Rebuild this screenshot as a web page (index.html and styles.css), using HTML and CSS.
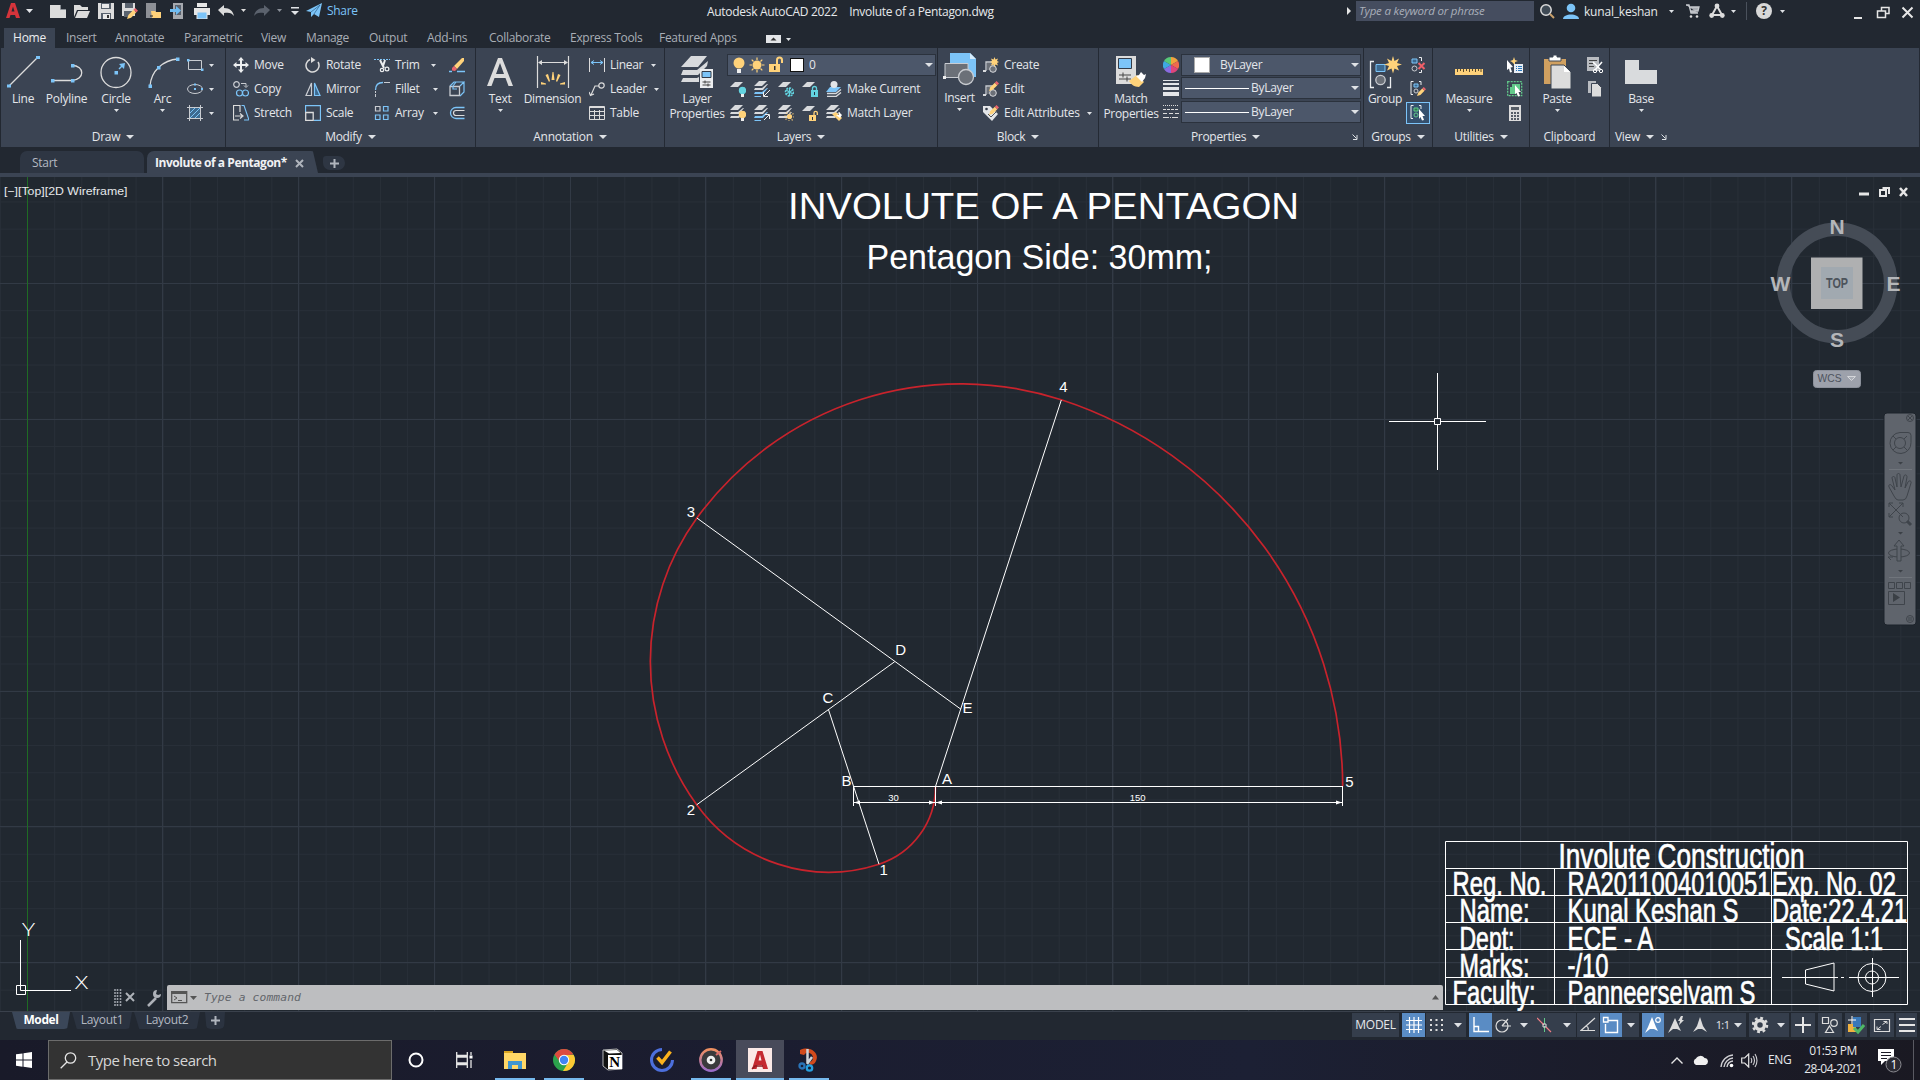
FILE: index.html
```html
<!DOCTYPE html>
<html lang="en">
<head>
<meta charset="utf-8">
<title>Autodesk AutoCAD 2022 - Involute of a Pentagon.dwg</title>
<link rel="stylesheet" href="styles.css">
</head>
<body>
<svg width="0" height="0" class="defs">
  <symbol id="dn" viewBox="0 0 5 3"><path d="M0 0h5L2.500 3z" fill="#dfe2e6"/></symbol>
  <symbol id="dnb" viewBox="0 0 8 4"><path d="M0 0h8L4 4z" fill="#dfe2e6"/></symbol>
  <symbol id="sheets" viewBox="0 0 16 16"><path d="M5 0h8L8 5H0zM1 7h7l5-4h1L9 9H0zM1 11h7l5-4h1l-5 6H0z" fill="#d8dadd"/></symbol>
  <symbol id="sheetsb" viewBox="0 0 16 16"><path d="M5 0h8L8 5H0zM1 7h7l5-4h1L9 9H0z" fill="#d8dadd"/><path d="M1 11h7l5-4h1l-5 6H0zM1 15h6v1H0z" fill="#7cc4f8"/></symbol>
  <symbol id="sheet1" viewBox="0 0 16 16"><path d="M5 1h8L8 6H0z" fill="#d8dadd"/></symbol>
  <symbol id="launch" viewBox="0 0 6 6"><path d="M.5.5l4 4M5 1v4.500H1" fill="none" stroke="#dfe2e6"/></symbol>
  <symbol id="pencil" viewBox="0 0 12 12"><path d="M0 12l1.500-4.500L7 2l3 3-5.500 5.500z" fill="#ffd27a"/><path d="M7 2l2-2 3 3-2 2z" fill="#e8646c"/></symbol>
  <symbol id="blk" viewBox="0 0 16 16"><path d="M3 14H1M3 14V5h9" fill="none" stroke="#c9ccd1" stroke-width="1.300"/><path d="M4 6h7v7H4z" fill="#6b7078"/><circle cx="10" cy="12" r="3.300" fill="#6b7078" stroke="#d8dadd"/><path d="M0 13h3v2H0z" fill="#d8dadd"/></symbol>
</svg>
<div class="app">

<header class="titlebar">
  <div class="quick">
    <svg class="q1" width="28" height="18" viewBox="0 0 28 18"><path d="M0 16L5 1h4l5 15h-4l-1-3H4.500l-1 3zM5.500 9.500h3L7 4.500z" fill="#d5343b"/><path d="M20 7h7l-3.500 4z" fill="#e3e5e8"/></svg>
    <svg width="16" height="16"><path d="M0 2h11l5 4v9H0zM11 2v4h5" fill="#dcdcdc"/><path d="M10.500 2v4.500H16" stroke="#8a8f96" fill="none"/></svg>
    <svg width="16" height="16"><path d="M0 2h6l2 2h6v3H3L0 14z" fill="#dcdcdc"/><path d="M4 8h12l-3 7H1z" fill="#dcdcdc"/></svg>
    <svg width="16" height="16"><path d="M0 0h16v16H0z" fill="#dcdcdc"/><path d="M3 0h10v6H3zM3 10h10v6H3z" fill="#59626e"/><path d="M4 1h7v4H4zM5 11h7v5H5z" fill="#e9e9e9"/><path d="M9 12h2v3H9z" fill="#333"/></svg>
    <svg width="16" height="16"><path d="M0 0h13v13H0z" fill="#dcdcdc"/><path d="M3 0h8v5H3zM2 8h8v6H2z" fill="#59626e"/><use href="#pencil" x="5" y="5" width="11" height="11"/></svg>
    <svg width="16" height="16"><path d="M0 0h10v15H0z" fill="#8d9096"/><path d="M5 8h4l1 1h5v6H6z" fill="#ffd27a"/><path d="M4 13h3" stroke="#222"/></svg>
    <svg width="16" height="16"><path d="M3 0h10v16H3z" fill="#a6a9ae"/><path d="M5 2h6v10H5z" fill="#59626e"/><path d="M0 6h6V3l5 4.500L6 12V9H0z" fill="#6fbcf2"/></svg>
    <svg width="16" height="16"><path d="M3 0h10v4H3zM0 5h16v7H0z" fill="#e6e6e6"/><path d="M3 9h10v7H3z" fill="#7cc4f8" stroke="#e6e6e6"/></svg>
    <svg width="28" height="16"><path d="M0 7l6-5v3c6 0 9 3 10 8-2-3-5-4-10-3v3z" fill="#dcdcdc"/><path d="M23 6h5l-2.500 3z" fill="#dcdcdc"/></svg>
    <svg width="28" height="16"><path d="M16 7l-6-5v3C4 5 1 8 0 13c2-3 5-4 10-3v3z" fill="#5b626d"/><path d="M23 6h5l-2.500 3z" fill="#8b9099"/></svg>
    <svg width="8" height="16"><path d="M0 4h8v1.500H0zM0 8h8l-4 4z" fill="#dfe2e6"/></svg>
    <svg width="16" height="16"><path d="M0 8L16 0l-3 14-5-3-3 3V9z" fill="#7cc4f8"/><path d="M5 9l9-7-6 9" stroke="#2b5f88" fill="none" stroke-width=".7"/></svg>
    <span class="share">Share</span>
  </div>
  <div class="apptitle"><span>Autodesk AutoCAD 2022</span><span>Involute of a Pentagon.dwg</span></div>
  <div class="infocenter">
    <svg width="8" height="10"><path d="M1 1l4 4-4 4z" fill="#e6e6e6"/></svg>
    <div class="kw">Type a keyword or phrase</div>
    <svg class="mag" width="16" height="16"><circle cx="6" cy="7" r="5.200" fill="#3f4a55" stroke="#dcdcdc" stroke-width="1.500"/><path d="M10 11l4 4" stroke="#c9a06b" stroke-width="2"/></svg>
    <svg class="usr" width="16" height="16"><circle cx="8" cy="5" r="4.300" fill="#7cc4f8"/><path d="M0 16c0-6 16-6 16 0z" fill="#7cc4f8"/></svg>
    <span class="uname">kunal_keshan</span>
    <svg class="a1" width="5" height="3"><use href="#dn"/></svg>
    <svg class="cart" width="14" height="16"><path d="M0 2h3l2 8h7M4 4h9l-1 4H5" fill="#a9adb3" stroke="#c6c9ce" stroke-width="1.300"/><circle cx="5" cy="13.500" r="1.300" fill="#dcdcdc"/><circle cx="11" cy="13.500" r="1.300" fill="#dcdcdc"/></svg>
    <svg class="tri" width="16" height="16"><path d="M8 3L3 12h10z" fill="none" stroke="#dcdcdc" stroke-width="2"/><circle cx="8" cy="3" r="2.400" fill="#dcdcdc"/><circle cx="2.700" cy="12.500" r="2.400" fill="#dcdcdc"/><circle cx="13.300" cy="12.500" r="2.400" fill="#dcdcdc"/></svg>
    <svg class="a2" width="5" height="3"><use href="#dn"/></svg>
    <i class="vsep"></i>
    <span class="help">?</span>
    <svg class="a3" width="5" height="3"><use href="#dn"/></svg>
    <svg class="wc" width="60" height="14"><path d="M0 11h8v2H0z" fill="#e6e6e6"/><path d="M27.500 4.500v-3h7.500v6h-3M23.500 5h8v6.500h-8z" fill="none" stroke="#e6e6e6" stroke-width="1.500"/><path d="M48.500 1.500l10 10m0-10l-10 10" stroke="#e6e6e6" stroke-width="2"/></svg>
  </div>
</header>

<nav class="rtabs">
  <b class="on">Home</b><span>Insert</span><span>Annotate</span><span>Parametric</span><span>View</span><span>Manage</span><span>Output</span><span>Add-ins</span><span>Collaborate</span><span>Express Tools</span><span>Featured Apps</span>
  <svg width="26" height="9"><path d="M0 0h15v8H0z" fill="#e3e5e8"/><path d="M4.500 5.500h6l-3-3z" fill="#333"/><path d="M20 3h5l-2.500 3z" fill="#dfe2e6"/></svg>
</nav>

<section class="ribbon">
  <div class="panel p-draw"><div class="body">
    <div class="big"><svg width="34" height="34"><path d="M3 31L31 3" stroke="#dcdcdc" stroke-width="1.200"/><path d="M1 29.500h4v3H1zM30 1h4v3h-4z" fill="#7cc4f8"/></svg><span>Line</span></div>
    <div class="big"><svg width="34" height="34"><path d="M3 25.500h19c13-1 13-15 0-15" fill="none" stroke="#dcdcdc" stroke-width="1.300"/><path d="M1 24h3.500v3.500H1zM21 24h3.500v3.500H21zM21 9h3.500v3.500H21z" fill="#7cc4f8"/></svg><span>Polyline</span></div>
    <div class="big"><svg width="34" height="34"><circle cx="17" cy="17.500" r="15" fill="none" stroke="#dcdcdc" stroke-width="1.300"/><path d="M15.500 16h3.500v3.500h-3.500zM20 9l6-1-1 6z" fill="#7cc4f8"/><path d="M20 14l4-4" stroke="#7cc4f8" stroke-width="1.500"/></svg><span>Circle</span><svg class="d" width="5" height="3"><use href="#dn"/></svg></div>
    <div class="big"><svg width="34" height="34"><path d="M4 31C5 16 17 5 32 4" fill="none" stroke="#dcdcdc" stroke-width="1.300"/><path d="M2.500 29.500H6V33H2.500zM11 11h3.500v3.500H11zM30 2.500h3.500V6H30z" fill="#7cc4f8"/></svg><span>Arc</span><svg class="d" width="5" height="3"><use href="#dn"/></svg></div>
    <div class="col">
      <div class="row"><svg width="17" height="16"><path d="M1.500 3.500h13v9h-13z" fill="none" stroke="#c9ccd1"/><path d="M0 2h2.500v2.500H0zM14 11.500h2.500V14H14z" fill="#7cc4f8"/></svg><svg width="5" height="3"><use href="#dn"/></svg></div>
      <div class="row"><svg width="17" height="16"><ellipse cx="8" cy="8" rx="7.500" ry="4.500" fill="none" stroke="#c9ccd1"/><path d="M7 7h2v2H7zM7 2.500h2v2H7zM14 7h2v2h-2z" fill="#7cc4f8"/></svg><svg width="5" height="3"><use href="#dn"/></svg></div>
      <div class="row"><svg width="17" height="16"><path d="M3 3h10v10H3z" fill="#3d6a90"/><path d="M3 8l5-5M3 13L13 3M8 13l5-5" stroke="#7cc4f8"/><path d="M2.500 0v16M13.500 0v16M0 2.500h16M0 13.500h16" stroke="#c9ccd1"/></svg><svg width="5" height="3"><use href="#dn"/></svg></div>
    </div>
  </div><footer>Draw<svg width="8" height="4"><use href="#dnb"/></svg></footer></div>

  <div class="panel p-mod"><div class="body modgrid">
    <div class="row"><svg width="16" height="16"><path d="M8 0l3 3.500H9V7h3.500V5L16 8l-3.500 3V9H9v3.500h2L8 16l-3-3.500h2V9H3.500v2L0 8l3.500-3v2H7V3.500H5z" fill="#eceef0"/></svg><span>Move</span></div>
    <div class="row"><svg width="16" height="16"><path d="M5 2.500A6.500 6.500 0 1 0 13 5" fill="none" stroke="#dcdcdc" stroke-width="1.500"/><path d="M6 0l4.500 3L6 6z" fill="#dcdcdc"/></svg><span>Rotate</span></div>
    <div class="row"><svg width="16" height="16"><path d="M0 2.500h16" stroke="#7cc4f8" stroke-dasharray="2 1"/><path d="M6 3l4 8M11 3L9 9" stroke="#eceef0" stroke-width="2"/><circle cx="8" cy="13" r="1.700" fill="none" stroke="#eceef0" stroke-width="1.200"/><circle cx="13" cy="12" r="1.900" fill="none" stroke="#eceef0" stroke-width="1.200"/></svg><span class="w">Trim</span><svg width="5" height="3"><use href="#dn"/></svg></div>
    <div class="row"><svg width="16" height="16"><path d="M5 9l8-8 2 0v3l-7 8z" fill="#ffd27a"/><path d="M3 11l2-2 3 3-2 2-3-.5z" fill="#e8646c"/><path d="M0 14.500h3M8 14.500h8" stroke="#7cc4f8" stroke-width="1.300"/></svg></div>
    <div class="row"><svg width="16" height="16"><circle cx="3.500" cy="3.500" r="2.800" fill="none" stroke="#c9ccd1" stroke-width="1.200"/><path d="M8 2.500h5v3M11 4.500l2 2 2-2" fill="none" stroke="#c9ccd1"/><circle cx="6.500" cy="12" r="3" fill="none" stroke="#7cc4f8" stroke-width="1.200"/><circle cx="12.500" cy="12" r="3" fill="none" stroke="#7cc4f8" stroke-width="1.200"/></svg><span>Copy</span></div>
    <div class="row"><svg width="16" height="16"><path d="M6.500 2v12.500H1z" fill="none" stroke="#c9ccd1" stroke-width="1.200"/><path d="M9.500 2v12.500H15z" fill="#3d6a90" stroke="#7cc4f8" stroke-width="1.200"/></svg><span>Mirror</span></div>
    <div class="row"><svg width="16" height="16"><path d="M1.500 16V10" stroke="#c9ccd1" stroke-dasharray="3 1"/><path d="M1.500 9c0-5 3-7.500 7.500-7.500" fill="none" stroke="#7cc4f8" stroke-width="1.300"/><path d="M10 1.500h6" stroke="#c9ccd1"/></svg><span class="w">Fillet</span><svg width="5" height="3"><use href="#dn"/></svg></div>
    <div class="row"><svg width="16" height="16"><path d="M1 5.500h9.500v9H1z" fill="none" stroke="#c9ccd1" stroke-width="1.300"/><path d="M1 5l4-4h10l-4 4M15 1v10l-4 4M4 5V8h4M7 1L4 5" fill="none" stroke="#7cc4f8" stroke-width="1.200"/></svg></div>
    <div class="row"><svg width="16" height="16"><path d="M6 15H.5V.5H7V7M2 11h7M7 8.500l3 2.500-3 2.500" fill="none" stroke="#dcdcdc" stroke-width="1.200"/><path d="M8.500.5H11L16 15h-5" fill="none" stroke="#7cc4f8" stroke-width="1.100"/></svg><span>Stretch</span></div>
    <div class="row"><svg width="16" height="16"><path d="M.5 7V.5h15v15H9" fill="none" stroke="#7cc4f8" stroke-width="1.300"/><path d="M.7 7.500h7.500v8H.7z" fill="none" stroke="#dcdcdc" stroke-width="1.300"/></svg><span>Scale</span></div>
    <div class="row"><svg width="16" height="16"><path d="M1.500 1.500h4.500v4.500H1.500z" fill="none" stroke="#c9ccd1" stroke-width="1.200"/><path d="M9.500 1.500H14v4.500H9.500zM1.500 10H6v4.500H1.500zM9.500 10H14v4.500H9.500z" fill="none" stroke="#7cc4f8" stroke-width="1.200"/></svg><span class="w">Array</span><svg width="5" height="3"><use href="#dn"/></svg></div>
    <div class="row"><svg width="16" height="16"><path d="M15.500 2.500H7a5.500 5.500 0 0 0 0 11h8.500" fill="none" stroke="#7cc4f8" stroke-width="1.300"/><path d="M15.500 5.500H7a2.500 2.500 0 0 0 0 5h8.500" fill="none" stroke="#dcdcdc" stroke-width="1.200"/></svg></div>
  </div><footer>Modify<svg width="8" height="4"><use href="#dnb"/></svg></footer></div>

  <div class="panel p-ann"><div class="body">
    <div class="big"><svg width="34" height="34"><path d="M4 31L15 3h4l11 28h-4.500l-3-8H11.500l-3 8zM13 19h8l-4-11z" fill="#dcdcdc"/></svg><span>Text</span><svg class="d" width="5" height="3"><use href="#dn"/></svg></div>
    <div class="big"><svg width="34" height="34"><path d="M1.500 1v32M32.500 1v32M3 7.500h28" stroke="#dcdcdc" stroke-width="1.200"/><path d="M2 7.500l4-2.500v5zM32 7.500L28 5v5z" fill="#dcdcdc"/><path d="M15.500 25h3L17.500 17h-1zM9.500 20l2.500-1 2 7-1 1zM24.500 20l-2.500-1-2 7 1 1zM5 27v2.500h5v-1zM29 27v2.500h-5v-1z" fill="#ffd27a"/></svg><span>Dimension</span></div>
    <div class="col">
      <div class="row"><svg width="16" height="16"><path d="M.5 1v14M15.500 1v14" stroke="#dcdcdc"/><path d="M2 5.500h12M5 3.500l-3 2 3 2M11 3.500l3 2-3 2" fill="none" stroke="#7cc4f8"/></svg><span class="w1">Linear</span><svg width="5" height="3"><use href="#dn"/></svg></div>
      <div class="row"><svg width="16" height="16"><circle cx="12.500" cy="4.500" r="2.700" fill="none" stroke="#dcdcdc" stroke-width="1.200"/><path d="M10 5H6L2 14M0 11l1.500 3.500L5 13" fill="none" stroke="#dcdcdc" stroke-width="1.200"/></svg><span class="w2">Leader</span><svg width="5" height="3"><use href="#dn"/></svg></div>
      <div class="row"><svg width="16" height="16"><path d="M.5 1.500h15v13H.5zM0 2.500h16M.5 6.500h15M.5 10.500h15M5.500 5v9M10.500 5v9" fill="none" stroke="#dcdcdc"/></svg><span>Table</span></div>
    </div>
  </div><footer>Annotation<svg width="8" height="4"><use href="#dnb"/></svg></footer></div>

  <div class="panel p-lay"><div class="body">
    <div class="big two"><svg width="34" height="34"><path d="M11 1h16l-9 11H1zM3 15h14L28 6l-1 5-9 9H1zM3 23h14l2-1v5H1z" fill="#d8dadd"/><path d="M20 14h13v19H20z" fill="#eceef0"/><path d="M22 16.500h9v6h-9z" fill="#7cc4f8" stroke="#333c49"/><path d="M22.500 27h8M22.500 30h8M25 25.500v3M28 28.500v3" stroke="#444"/></svg><span>Layer<br>Properties</span></div>
    <div class="laycol">
      <div class="combo laycombo">
        <svg width="62" height="18"><circle cx="7" cy="7" r="5.500" fill="#ffd27a"/><path d="M5 13h4v4H5z" fill="#eee"/><circle cx="25" cy="9" r="4.500" fill="#ffd27a"/><path d="M25 1.500v2.500M25 14v2.500M17.500 9H20M30 9h2.500M19.700 3.700l1.800 1.800M28.500 12.500l1.800 1.800M30.300 3.700l-1.800 1.800M21.500 12.500l-1.800 1.800" stroke="#ffd27a" stroke-width="1.200"/><path d="M37 8h11v8H37z" fill="#ffd27a"/><path d="M45 8V4a2.500 2.500 0 0 1 5 0v3" fill="none" stroke="#ffd27a" stroke-width="2"/><path d="M42 10h1.500v4H42z" fill="#333"/></svg>
        <i class="sw"></i><span>0</span><svg class="r" width="8" height="4"><use href="#dnb"/></svg>
      </div>
      <div class="licons">
        <svg width="16" height="16"><use href="#sheet1"/><circle cx="12.500" cy="9.500" r="3.700" fill="#63d3e0"/><path d="M11 13h3v3h-3z" fill="#eee"/></svg>
        <svg width="16" height="16"><use href="#sheetsb"/><path d="M16 9l-6 6M9.500 11v4.500H14" stroke="#eee" fill="none"/></svg>
        <svg width="16" height="16"><use href="#sheet1"/><circle cx="11.500" cy="11" r="4" fill="none" stroke="#63d3e0" stroke-width="1.600" stroke-dasharray="2 1"/><path d="M11.500 7v8M8 9l7 4M15 9l-7 4" stroke="#63d3e0" stroke-width="1.200"/></svg>
        <svg width="16" height="16"><use href="#sheet1"/><path d="M9 9h7v7H9z" fill="#63d3e0"/><path d="M10.500 9V7.500a2 2 0 0 1 4 0V9" fill="none" stroke="#63d3e0" stroke-width="1.300"/><path d="M12 11h1v3h-1z" fill="#234"/></svg>
        <svg width="16" height="16"><path d="M4 6h11l-5 5H0z" fill="#7cc4f8"/><circle cx="8" cy="3.500" r="3.500" fill="#e3e5e8"/><path d="M1 12.500h9l5-4M1 15.500h9l5-4" fill="none" stroke="#d8dadd" stroke-width="1.400"/></svg>
        <span>Make Current</span>
        <svg width="16" height="16"><use href="#sheets"/><circle cx="12.500" cy="9.500" r="3.700" fill="#ffd27a"/><path d="M11 13h3v3h-3z" fill="#eee"/></svg>
        <svg width="16" height="16"><use href="#sheetsb"/><path d="M10 15l5-5M11 9.500h4.500V14" stroke="#eee" fill="none"/></svg>
        <svg width="16" height="16"><use href="#sheets"/><circle cx="11.500" cy="11.500" r="2.600" fill="#ffd27a"/><circle cx="11.500" cy="11.500" r="4.300" fill="none" stroke="#ffd27a" stroke-dasharray="1 2.300" stroke-width="1.300"/></svg>
        <svg width="16" height="16"><use href="#sheet1"/><path d="M7 10h7v6H7z" fill="#ffd27a"/><path d="M12 10V8a1.600 1.600 0 0 1 3.300 0v2" fill="none" stroke="#ffd27a" stroke-width="1.300"/><path d="M10 12h1v3h-1z" fill="#234"/></svg>
        <svg width="16" height="16"><use href="#sheets"/><path d="M6 9l4-2 6 6-3 3z" fill="#ffd27a"/><path d="M10 10l3 0 0-3 3 3-2 3z" fill="#fff"/></svg>
        <span>Match Layer</span>
      </div>
    </div>
  </div><footer>Layers<svg width="8" height="4"><use href="#dnb"/></svg></footer></div>

  <div class="panel p-blk"><div class="body">
    <div class="big"><svg width="34" height="34"><path d="M7 0h20l6 6v18H7z" fill="#7cc4f8"/><path d="M27 0v6h6z" fill="#d6ecfc"/><path d="M2 10.500h23v14H2z" fill="#6b7078" stroke="#c9ccd1"/><circle cx="23" cy="24" r="7.500" fill="#6b7078" stroke="#c9ccd1" stroke-width="1.300"/><path d="M0 23h3v3H0z" fill="#eee"/></svg><span>Insert</span><svg class="d" width="5" height="3"><use href="#dn"/></svg></div>
    <div class="col">
      <div class="row"><svg width="16" height="16"><use href="#blk"/><path d="M11.500 0l1 2.500L15 1.500l-1 2.500 2 1-2 1 1 2.500-2.500-1-1 2.500-1-2.500-2.500 1 1-2.500-2-1 2-1-1-2.500 2.500 1z" fill="#ffd27a"/></svg><span>Create</span></div>
      <div class="row"><svg width="16" height="16"><use href="#blk"/><use href="#pencil" x="6" y="0" width="10" height="10"/></svg><span>Edit</span></div>
      <div class="row"><svg width="16" height="16"><path d="M0 1h7l8 8-6 7-9-9z" fill="#e3e5e8"/><circle cx="3.500" cy="4" r="1.300" fill="#333c49"/><path d="M5 9l3 3 6-6" stroke="#555" fill="none"/><use href="#pencil" x="6" y="0" width="10" height="10"/></svg><span class="w3">Edit Attributes</span><svg width="5" height="3"><use href="#dn"/></svg></div>
    </div>
  </div><footer>Block<svg width="8" height="4"><use href="#dnb"/></svg></footer></div>

  <div class="panel p-prop"><div class="body">
    <div class="big two"><svg width="34" height="34"><path d="M2 1h20v28H2z" fill="#dcdcdc"/><path d="M4.500 3.500h13v10h-13z" fill="#7cc4f8" stroke="#333c49"/><path d="M5 20h12M5 24h12M9 17.500v5M13 21.500v5" stroke="#444"/><path d="M15 26l8-6 7 7-5 5c-5 0-8-3-10-6z" fill="#ffd27a"/><path d="M22 21l3-1 2-3 3 3 2-1-1 4-3 4z" fill="#fff"/></svg><span>Match<br>Properties</span></div>
    <div class="propgrid">
      <svg width="16" height="16" viewBox="0 0 16 16"><path d="M8 8V0a8 8 0 0 1 7 4z" fill="#f0a33e"/><path d="M8 8l7-4a8 8 0 0 1 0 8z" fill="#ef6a4e"/><path d="M8 8l7 4a8 8 0 0 1-7 4z" fill="#e0457b"/><path d="M8 8v8a8 8 0 0 1-7-4z" fill="#8a6be0"/><path d="M8 8l-7 4a8 8 0 0 1 0-8z" fill="#3fa9e0"/><path d="M8 8L1 4a8 8 0 0 1 7-4z" fill="#57c878"/></svg>
      <div class="combo"><i class="sw s2"></i><span class="bl1">ByLayer</span><svg class="r" width="8" height="4"><use href="#dnb"/></svg></div>
      <svg width="16" height="16"><path d="M0 0h16v1H0zM0 3h16v2H0zM0 7h16v3H0zM0 12h16v4H0z" fill="#e3e5e8"/></svg>
      <div class="combo"><i class="ln"></i><span>ByLayer</span><svg class="r" width="8" height="4"><use href="#dnb"/></svg></div>
      <svg width="16" height="16"><path d="M0 1.500h16" stroke="#dcdcdc" stroke-dasharray="1 1"/><path d="M0 5.500h16" stroke="#dcdcdc" stroke-dasharray="3 1"/><path d="M0 9.500h16" stroke="#dcdcdc" stroke-dasharray="4 2"/><path d="M0 13.500h16" stroke="#dcdcdc" stroke-dasharray="6 1 1 1"/></svg>
      <div class="combo"><i class="ln"></i><span>ByLayer</span><svg class="r" width="8" height="4"><use href="#dnb"/></svg></div>
    </div>
  </div><footer><span class="fx">Properties<svg width="8" height="4"><use href="#dnb"/></svg></span><svg class="la" width="6" height="6"><use href="#launch"/></svg></footer></div>

  <div class="panel p-grp"><div class="body">
    <div class="big"><svg width="34" height="34"><path d="M6 6.500H2.500v26H6M19 32.500h3.500V22" fill="none" stroke="#eceef0" stroke-width="1.300"/><path d="M8 9.500h9v7H8z" fill="#3d6a90" stroke="#7cc4f8"/><circle cx="12.500" cy="25" r="4.700" fill="#6b7078" stroke="#c9ccd1" stroke-width="1.300"/><path d="M25 1l1.500 5L31 3.500 29 8l5 1.500-5 1.500 2 4.500-4.500-2-1.500 5-1.500-5-4.500 2 2-4.500-5-1.500L21 8l-2-4.500L23.500 6z" fill="#ffd27a"/></svg><span>Group</span></div>
    <div class="col gcol">
      <div class="cell"><svg width="16" height="16"><path d="M2 2h5v4H2z" fill="#3d6a90" stroke="#7cc4f8"/><circle cx="4.500" cy="11.500" r="2.500" fill="none" stroke="#c9ccd1"/><path d="M9 .5h2.500V4M9 15.500h2.500V13" stroke="#eceef0" fill="none"/><path d="M8.500 6l6 6M14.500 6l-6 6" stroke="#ef5f68" stroke-width="2"/></svg></div>
      <div class="cell"><svg width="16" height="16"><path d="M3.500.5H1v13h2M9 .5h2V4" stroke="#eceef0" fill="none"/><path d="M4 3h4v3H4z" fill="#3d6a90" stroke="#7cc4f8"/><circle cx="6" cy="10" r="2" fill="none" stroke="#c9ccd1"/><use href="#pencil" x="7" y="6" width="9" height="9"/></svg></div>
      <div class="cell sel"><svg width="16" height="16"><path d="M3.500.5H1v13h2M9 .5h2V4" stroke="#eceef0" fill="none"/><path d="M4 3h4v3H4z" fill="#2d7a4e" stroke="#62c98a"/><circle cx="6" cy="10" r="2" fill="none" stroke="#62c98a"/><path d="M9 4l6 7h-2.500l1.500 4-2 .5-1.500-3.500L9 14z" fill="#fff"/></svg></div>
    </div>
  </div><footer>Groups<svg width="8" height="4"><use href="#dnb"/></svg></footer></div>

  <div class="panel p-util"><div class="body">
    <div class="big"><svg width="34" height="34"><path d="M3 14h28v6H3z" fill="#ffd27a"/><path d="M5.500 14v3M8.500 14v2M11.500 14v3M14.500 14v2M17.500 14v3M20.500 14v2M23.500 14v3M26.500 14v2M29 14v3" stroke="#5a4a2a"/></svg><span>Measure</span><svg class="d" width="5" height="3"><use href="#dn"/></svg></div>
    <div class="col">
      <div class="row"><svg width="16" height="16"><path d="M0 3l6 7-2.500.500L5 15l-2 .5-1-4L0 13z" fill="#fff"/><path d="M7 0l1 3 3 1-3 1v3L5 5 3 4l3-1z" fill="#ffd27a"/><path d="M7 7h9v9H7z" fill="#e9eef4"/><path d="M9 9.500h1M9 11.500h1M9 13.500h1M11 9.500h4M11 11.500h4M11 13.500h4" stroke="#2b78bd"/></svg></div>
      <div class="row"><svg width="16" height="16"><path d="M.7.7h14v14H.7z" fill="none" stroke="#62c98a" stroke-dasharray="2 1" stroke-width="1.300"/><path d="M5 3h8v6H9v4H3V6h2z" fill="#62c98a"/><path d="M8 4l6 7h-2.500l1.500 4-2 .5L9.500 12 8 13z" fill="#fff"/></svg></div>
      <div class="row"><svg width="16" height="16"><path d="M2 0h12v16H2z" fill="#dcdcdc"/><path d="M4 2h8v3H4zM4 7h2v2H4zM7 7h2v2H7zM10 7h2v2h-2zM4 10h2v2H4zM7 10h2v2H7zM10 10h2v2h-2zM4 13h2v2H4zM7 13h2v2H7zM10 13h2v2h-2z" fill="#555c66"/></svg></div>
    </div>
  </div><footer>Utilities<svg width="8" height="4"><use href="#dnb"/></svg></footer></div>

  <div class="panel p-clip"><div class="body">
    <div class="big"><svg width="34" height="34"><path d="M4 4h22v25H4z" fill="#d0a060"/><path d="M9 2h4V0h4v2h4v4H9z" fill="#fff" stroke="#3b4453"/><path d="M11 10h13l7 7v17H11z" fill="#dcdcdc" stroke="#3b4453"/><path d="M24 11v6h6z" fill="#fff"/></svg><span>Paste</span><svg class="d" width="5" height="3"><use href="#dn"/></svg></div>
    <div class="col">
      <div class="row"><svg width="16" height="16"><path d="M0 0h12v14H0z" fill="#b9bcc1"/><path d="M2 3.500h8M2 6.500h4M2 9.500h5" stroke="#444"/><path d="M6 5l8 8M15 5l-7 8" stroke="#fff" stroke-width="1.500"/><circle cx="8" cy="14" r="1.700" fill="none" stroke="#fff"/><circle cx="14" cy="14" r="1.700" fill="none" stroke="#fff"/></svg></div>
      <div class="row"><svg width="16" height="16"><path d="M1 0h8v12H1z" fill="#b9bcc1"/><path d="M4.500 2.500h6l4 4V16h-10z" fill="#dcdcdc" stroke="#3b4453"/></svg></div>
    </div>
  </div><footer>Clipboard</footer></div>

  <div class="panel p-view"><div class="body">
    <div class="big"><svg width="34" height="34"><path d="M1 5h14v10h18v14H1z" fill="#d9dbdd"/></svg><span>Base</span><svg class="d" width="5" height="3"><use href="#dn"/></svg></div>
  </div><footer>View<svg width="8" height="4"><use href="#dnb"/></svg><svg class="lb" width="6" height="6"><use href="#launch"/></svg></footer></div>
</section>

<nav class="doctabs">
  <div class="dt start">Start</div>
  <div class="dt act"><b>Involute of a Pentagon*</b><svg width="9" height="9"><path d="M1 1l7 7M8 1L1 8" stroke="#b0b5bd" stroke-width="2"/></svg></div>
  <div class="dt plus"><svg width="9" height="9"><path d="M4.500 0v9M0 4.500h9" stroke="#b0b5bd" stroke-width="2"/></svg></div>
</nav>

<main class="canvas">
<svg width="1920" height="834" viewBox="0 177 1920 834">
  <defs>
    <pattern id="minor" x="27" y="283" width="27.150" height="27.180" patternUnits="userSpaceOnUse"><path d="M.5 0v27.200M0 .5h27.200" stroke="#282f38" shape-rendering="crispEdges"/></pattern>
  </defs>
  <rect y="177" width="1920" height="834" fill="url(#minor)"/>
  <path class="major" d="M162.500 177v834M298.500 177v834M434.500 177v834M570.500 177v834M705.500 177v834M841.500 177v834M977.500 177v834M1112.500 177v834M1248.500 177v834M1384.500 177v834M1520.500 177v834M1655.500 177v834M1791.500 177v834M0 283.500h1920M0 419.500h1920M0 555.500h1920M0 691.500h1920M0 826.500h1920M0 962.500h1920"/>
  <path d="M27.500 177v834" stroke="#1f6b24"/>

  <g class="cad">
    <text x="788" y="219" font-size="37.600" textLength="511" lengthAdjust="spacingAndGlyphs">INVOLUTE OF A PENTAGON</text>
    <text x="866.500" y="269" font-size="34.500" textLength="346" lengthAdjust="spacingAndGlyphs">Pentagon Side: 30mm;</text>
  </g>

  <path class="inv" d="M935.500 786.500A81.500 81.500 0 0 1 879 864.200A163 163 0 0 1 696.700 804.800A244.500 244.500 0 0 1 696.900 518A326 326 0 0 1 1061.300 399.800A407.300 407.300 0 0 1 1342.700 786.500"/>
  <path class="thin" d="M828.600 710L879 864.200M894.700 661.700L696.700 804.800M961 709.300L696.900 518M935.500 786.500L1061.300 400M853 786.500H1343M853 802.500H1343M853.500 787v19M935.500 787v19M1342.500 787v19"/>
  <path d="M854 802.500l6-2v4zM935 802.500l-6-2v4zM936 802.500l6-2v4zM1342 802.500l-6-2v4z" fill="#fff"/>
  <g class="cad lab">
    <text x="1063.500" y="392">4</text><text x="690.800" y="517.400">3</text><text x="690.800" y="815">2</text><text x="883.700" y="875">1</text><text x="1349.500" y="787">5</text>
    <text x="947" y="784">A</text><text x="846.400" y="786">B</text><text x="828" y="703">C</text><text x="900.700" y="655">D</text><text x="967.500" y="713">E</text>
    <text class="dim" x="893.500" y="801">30</text><text class="dim" x="1137.700" y="801">150</text>
  </g>

  <path class="thin" d="M1389 421.500H1434M1441 421.500h45M1437.500 373v45M1437.500 425v45M1434.500 418.500h6v6h-6z"/>
  <path class="thin" d="M20.500 940v50.500H71M16.500 985.500h9v9h-9z"/>
  <g class="ucs"><text x="22" y="936" textLength="13" lengthAdjust="spacingAndGlyphs">Y</text><text x="75" y="989" textLength="13" lengthAdjust="spacingAndGlyphs">X</text></g>
  <text class="vpl" x="4" y="195" textLength="123.500" lengthAdjust="spacingAndGlyphs">[−][Top][2D Wireframe]</text>

  <path class="thin" d="M1445.500 841.500h462v163h-462zM1445 868.500h463M1445 895.500h463M1445 922.500h463M1445 949.500h463M1445 977.500h326M1554.500 868v136M1771.500 868v136"/>
  <g class="cad blk">
    <text x="1558.500" y="868" font-size="35.500" textLength="246" lengthAdjust="spacingAndGlyphs">Involute Construction</text>
    <text x="1452.500" y="894.500" textLength="94" lengthAdjust="spacingAndGlyphs">Reg. No.</text><text x="1567.500" y="894.500" textLength="203" lengthAdjust="spacingAndGlyphs">RA2011004010051</text><text x="1772" y="894.500" textLength="124" lengthAdjust="spacingAndGlyphs">Exp. No. 02</text>
    <text x="1459.500" y="922" textLength="70" lengthAdjust="spacingAndGlyphs">Name:</text><text x="1567.500" y="922" textLength="171" lengthAdjust="spacingAndGlyphs">Kunal Keshan S</text><text x="1772" y="922" textLength="135" lengthAdjust="spacingAndGlyphs">Date:22.4.21</text>
    <text x="1459.500" y="949.500" textLength="55" lengthAdjust="spacingAndGlyphs">Dept:</text><text x="1567.500" y="949.500" textLength="86" lengthAdjust="spacingAndGlyphs">ECE - A</text><text x="1785" y="949.500" textLength="98" lengthAdjust="spacingAndGlyphs">Scale 1:1</text>
    <text x="1459.500" y="976.500" textLength="70" lengthAdjust="spacingAndGlyphs">Marks:</text><text x="1567.500" y="976.500" textLength="41" lengthAdjust="spacingAndGlyphs">-/10</text>
    <text x="1452.500" y="1003.500" textLength="83" lengthAdjust="spacingAndGlyphs">Faculty:</text><text x="1567.500" y="1003.500" textLength="188" lengthAdjust="spacingAndGlyphs">Panneerselvam S</text>
  </g>
  <path class="thin" d="M1782 977.500h56M1841 977.500h3M1849 977.500h50M1872.500 958v39M1805.500 970v14l28.500 7v-28z"/>
  <circle class="thin" cx="1872" cy="977.500" r="14"/><circle class="thin" cx="1872" cy="977.500" r="6.500"/>

  <path d="M1859 192.500h10v3h-10z" fill="#e6e6e6"/><path d="M1880 190h6v6h-6zM1882.500 188h6.500v6" fill="none" stroke="#e6e6e6" stroke-width="2"/><path d="M1900 188l7 8M1907 188l-7 8" stroke="#e6e6e6" stroke-width="2.500"/>
  <circle cx="1837" cy="283" r="53.700" fill="none" stroke="#454c56" stroke-width="13.500"/>
  <rect x="1811" y="257.500" width="51.500" height="51.500" fill="#afb0b1"/><rect x="1821" y="267" width="32" height="32" fill="#a1a9b0"/>
  <text class="top" x="1826" y="288" textLength="22" lengthAdjust="spacingAndGlyphs">TOP</text>
  <g class="compass"><text x="1837" y="234">N</text><text x="1837" y="347">S</text><text x="1780.500" y="290.500">W</text><text x="1893.500" y="290.500">E</text></g>
  <rect x="1813.500" y="370.500" width="47" height="17" rx="3" fill="#9da1ab" stroke="#8c919b"/>
  <text class="wcs" x="1817.500" y="382" textLength="24" lengthAdjust="spacingAndGlyphs">WCS</text><path d="M1847.500 376.500h8l-4 4z" fill="#a9adb6" stroke="#d4d6da"/>

  <rect x="1884" y="413" width="32" height="212" rx="3" fill="#5f646c" stroke="#1d232b"/>
  <g class="nav">
    <circle cx="1910" cy="418" r="3.500"/><path d="M1908 416l4 4M1912 416l-4 4"/>
    <path d="M1900 432.500h8q3 0 3 3v7a10.500 10.500 0 1 1-11-10z"/><circle cx="1900" cy="443" r="5.500"/><path d="M1893 436l3 3M1907 436l-3 3M1893 450l3-3M1907 450l-3-3"/>
    <path d="M1889 469.500h23M1889 577.500h23" stroke="#70757c"/>
    <path d="M1894 496l-5-9c-1-3 2-3 3-1l3 4-3-12c0-2 3-2 3 0l2 9v-12c0-2 3-2 3 0l1 12 3-11c1-2 3-1 3 1l-2 11 3-6c1-2 4-1 3 1l-4 13q-1 4-4 4h-5q-2 0-4-4z"/>
    <path d="M1889 503l14 14M1889 517l14-14M1889 507v-4h4M1899 503h4v4M1889 513v4h4"/><circle cx="1904" cy="518" r="5"/><path d="M1907 521l4 4" stroke-width="3"/>
    <ellipse cx="1899" cy="553" rx="10.500" ry="4"/><path d="M1897 561v-15h-3l5-6 5 6h-3v15z" fill="#5f646c"/><path d="M1893 557h-5l3 3"/>
    <path d="M1888.500 582.500h6v6h-6zM1896.500 582.500h6v6h-6zM1904.500 582.500h6v6h-6zM1888.500 591.500h16v13h-16z"/><path d="M1893 593v9l7-4.500zM1898 462h5l-2.500 2.500zM1898 532h5l-2.500 2.500zM1898 570h5l-2.500 2.500z" fill="#3b4046" stroke="none"/>
    <circle cx="1910" cy="619" r="3.500"/><path d="M1908 618h4M1908 620h4"/>
  </g>
</svg>
<div class="cmd">
  <svg class="grip" width="54" height="20"><path d="M5.500 1v17M8.500 1v17M3 1v17" stroke="#9a9fa7" stroke-width="1.600" stroke-dasharray="2 1"/><path d="M14 5l8 8M22 5l-8 8" stroke="#aeb2b8" stroke-width="2"/><path d="M36 18l8-8" stroke="#aeb2b8" stroke-width="2.500"/><path d="M49 6a4 4 0 1 1-4-4l-1 4 2 1z" fill="#aeb2b8"/></svg>
  <div class="cmdin"><svg width="26" height="13"><path d="M.7.7h15v11H.7z" fill="none" stroke="#555" stroke-width="1.300"/><path d="M0 0h16v3H0z" fill="#555"/><path d="M3 5l3 2-3 2M7 9.500h4" stroke="#555" fill="none"/><path d="M19 5h7l-3.500 4z" fill="#555"/></svg><i>Type a command</i><svg class="up" width="7" height="5"><path d="M0 4.500h7L3.500 0z" fill="#555"/></svg></div>
</div>
</main>

<section class="status">
  <div class="lt m"><b>Model</b></div><div class="lt">Layout1</div><div class="lt">Layout2</div><div class="lt pl"><svg width="9" height="9"><path d="M4.500 0v9M0 4.500h9" stroke="#b0b5bd" stroke-width="2"/></svg></div>
  <div class="sb">
    <span class="s" style="width:47px">MODEL</span>
    <span class="s on" style="width:23px"><svg width="16" height="16"><path d="M3.500 0v16M8 0v16M12.500 0v16M0 3.500h16M0 8h16M0 12.500h16" stroke="#fff" stroke-width="1.200"/></svg></span>
    <span class="s n2" style="width:40px"><svg width="34" height="16"><path d="M1 3h14M1 8h14M1 13h14" stroke="#dcdcdc" stroke-width="2" stroke-dasharray="2 3.500"/><path d="M25 6h8l-4 4.500z" fill="#dfe2e6"/></svg></span>
    <span class="s on" style="width:23px"><svg width="18" height="18"><path d="M2 1v14.500h15M2 10.500h4.500v5" stroke="#fff" stroke-width="1.400" fill="none"/></svg></span>
    <span class="s n" style="width:40px"><svg width="34" height="16"><circle cx="7" cy="9" r="6" fill="none" stroke="#dcdcdc" stroke-width="1.200"/><path d="M7 9h9M7 9l6-7" stroke="#dcdcdc" stroke-width="1.200"/><path d="M25 6h8l-4 4.500z" fill="#dfe2e6"/></svg></span>
    <span class="s n" style="width:44px"><svg width="34" height="16"><path d="M7.500 1v6M7.500 9v6" stroke="#62c98a"/><path d="M0 1l7 7M9 10l5 5" stroke="#ef7f86" stroke-width="1.200"/><path d="M6 7h3v3H6z" fill="none" stroke="#ddd"/><path d="M26 6h8l-4 4.500z" fill="#dfe2e6"/></svg></span>
    <span class="s n2" style="width:22px"><svg width="16" height="16"><path d="M15 1L1 13.500h14M6 9q3 1 2 4" fill="none" stroke="#dcdcdc" stroke-width="1.200"/></svg></span>
    <span class="s on n2" style="width:22px"><svg width="18" height="18"><path d="M6 4.500h9.500v12h-12V8" stroke="#fff" stroke-width="1.400" fill="none"/><path d="M1.500 1.500H6V6H1.500z" stroke="#fff" fill="none" stroke-width="1.300"/></svg></span>
    <span class="s n" style="width:17px"><svg width="8" height="5"><path d="M0 0h8L4 4.500z" fill="#dfe2e6"/></svg></span>
    <span class="s on g" style="width:22px"><svg width="18" height="18"><path d="M8 1l4 10 2 4-4-2H6l-5 4 3-6z" fill="#fff"/><circle cx="14" cy="4" r="2.300" fill="none" stroke="#fff" stroke-width="1.200"/></svg></span>
    <span class="s n" style="width:24px"><svg width="18" height="18"><path d="M8 2l4 9 2 4-4-2H6l-5 4 3-6z" fill="#dcdcdc"/><path d="M14 0l-3 5h2l-1 4 5-5h-2l1-4z" fill="#dcdcdc"/></svg></span>
    <span class="s n" style="width:24px"><svg width="16" height="18"><path d="M8 1l3 9 4 6-5-3H6l-5 3 4-6z" fill="#dcdcdc"/></svg></span>
    <span class="s n sc" style="width:34px">1:1<svg width="8" height="5"><path d="M0 0h8L4 4.500z" fill="#dfe2e6"/></svg></span>
    <span class="s g" style="width:40px"><svg width="34" height="18"><circle cx="8" cy="9" r="4.500" fill="none" stroke="#dcdcdc" stroke-width="3.500"/><circle cx="8" cy="9" r="7" fill="none" stroke="#dcdcdc" stroke-width="2.500" stroke-dasharray="2.800 2.700"/><path d="M25 7h8l-4 4.500z" fill="#dfe2e6"/></svg></span>
    <span class="s h" style="width:24px"><svg width="16" height="16"><path d="M8 0v16M0 8h16" stroke="#e6e6e6" stroke-width="2"/></svg></span>
    <span class="s" style="width:24px"><svg width="18" height="18"><path d="M1.500 1.500h6v6h-6zM8.500 10l4 6.500h-8z" fill="none" stroke="#dcdcdc" stroke-width="1.200"/><circle cx="13" cy="7" r="3.300" fill="none" stroke="#dcdcdc" stroke-width="1.200"/></svg></span>
    <span class="s" style="width:22px"><svg width="18" height="18"><path d="M1 8h8v8H1z" fill="#f0b240"/><path d="M6 1h8v10H6z" fill="#3978b9"/><path d="M5 0v8M1 4h8" stroke="#fff"/><path d="M7 12l4 4 6-7" stroke="#4fb866" stroke-width="3" fill="none"/></svg></span>
    <span class="s" style="width:24px"><svg width="18" height="16"><path d="M1.500 2.500h15v12h-15z" fill="none" stroke="#dcdcdc" stroke-width="1.200"/><path d="M9.500 7.500L14 4.500M10.500 4.500H14V7M8 9.500l-4 3M4 9.500v3h3.500" stroke="#dcdcdc" fill="none"/></svg></span>
    <span class="s h" style="width:21px"><svg width="16" height="14"><path d="M0 1h16M0 7h16M0 13h16" stroke="#e6e6e6" stroke-width="2"/></svg></span>
  </div>
</section>

<footer class="taskbar">
  <div class="win"><svg width="16" height="16"><path d="M0 2.300L6.500 1.400v6.200H0zM7.500 1.200L16 0v7.600H7.500zM0 8.500h6.500v6.200L0 13.800zM7.500 8.500H16V16l-8.500-1.200z" fill="#fff"/></svg></div>
  <div class="search"><svg width="17" height="17"><circle cx="10.500" cy="6" r="5.200" fill="none" stroke="#e6e6e6" stroke-width="1.300"/><path d="M7 10L.7 16.300" stroke="#e6e6e6" stroke-width="1.300"/></svg>Type here to search</div>
  <div class="ti"><svg width="16" height="16"><circle cx="8" cy="8" r="6.500" fill="none" stroke="#fff" stroke-width="2"/></svg></div>
  <div class="ti"><svg width="17" height="16"><path d="M.7 0v3.500h10.600V0M.7 16v-3.500h10.600V16M.7 5h10.600v6H.7zM15 0v3M15 8v8" fill="none" stroke="#e6e6e6" stroke-width="1.300"/><path d="M13.500 3.500h3v3h-3z" fill="#fff"/></svg></div>
  <div class="ti run lead"><svg width="24" height="24"><path d="M1 3h9v3H1z" fill="#d9a520"/><path d="M1 5h22v16H1z" fill="#ffd766"/><path d="M5 21v-8h14v8h-4v-4H9v4z" fill="#3f96d0"/></svg></div>
  <div class="ti run"><svg width="24" height="24" viewBox="0 0 24 24"><circle cx="12" cy="12" r="11" fill="#2ba24c"/><path d="M2.500 6.500A11 11 0 0 1 21.500 6.500L12 7.500 8 14z" fill="#dd4b3e"/><path d="M21.700 7A11 11 0 0 1 11 23l5.500-9L12 7z" fill="#fcc934"/><circle cx="12" cy="12" r="5.200" fill="#fff"/><circle cx="12" cy="12" r="4.200" fill="#4285f4"/></svg></div>
  <div class="ti"><svg width="24" height="24"><path d="M2 2l14-1 5 4v16l-14 1-5-4z" fill="#111" stroke="#ddd" stroke-width=".8"/><path d="M7 7h14v14H7z" fill="#fff"/><path d="M3 2.500L16 2l3.500 3L8 5.500z" fill="#fff"/><text x="8.300" y="19" font-family="Liberation Serif, serif" font-weight="bold" font-size="15">N</text></svg></div>
  <div class="ti"><svg width="24" height="24"><path d="M12 1.500A10.500 10.500 0 1 0 22.500 12" fill="none" stroke="#4c6fdc" stroke-width="3"/><path d="M7.500 9.500l4.500 5 8.500-11" fill="none" stroke="#fcb21c" stroke-width="3.500"/></svg></div>
  <div class="ti run"><svg width="24" height="24"><defs><linearGradient id="mg" x2="0" y2="1"><stop stop-color="#f09060"/><stop offset="1" stop-color="#9a6cc8"/></linearGradient></defs><circle cx="12" cy="12" r="10.700" fill="#3a3a3c" stroke="url(#mg)" stroke-width="2.400"/><circle cx="12" cy="12" r="4.300" fill="#f0f0f0"/><circle cx="12" cy="12" r="1.300" fill="#333"/><path d="M17 7l5-4" stroke="#d86a6a" stroke-width="2"/></svg></div>
  <div class="ti run cur"><svg width="24" height="24"><path d="M0 0h24v24H0z" fill="#fbe9e6"/><path d="M4 21L9.500 3h5L20 21h-5l-1-4H9.500l-1 4zM10.500 12.500h3L12 6.500z" fill="#c42a30"/><path d="M4 21l3-3h8" stroke="#8f1a20" stroke-width="1.500" fill="none"/></svg></div>
  <div class="ti run"><svg width="24" height="24"><path d="M3 2c10-5 20 3 16 11-1 3-4 4-7 4l1-3c6-3 2-11-4-9l-2 2-4-1z" fill="#d24a1c"/><path d="M10.500 1v14M15 9l-5 7" stroke="#cfd3d8" stroke-width="2.500"/><circle cx="5" cy="18" r="2.500" fill="none" stroke="#2a74b8" stroke-width="2.300"/><circle cx="12.500" cy="20" r="2.700" fill="none" stroke="#27a0e0" stroke-width="2.300"/></svg></div>
  <div class="tray">
    <svg class="t1" width="12" height="7"><path d="M.5 6.500L6 1l5.500 5.500" fill="none" stroke="#e6e6e6" stroke-width="1.400"/></svg>
    <svg class="t2" width="17" height="12"><path d="M4 11a3.500 3.500 0 0 1 0-6.500A5 5 0 0 1 12.500 4 3.600 3.600 0 0 1 13.500 11z" fill="#f0f0f0"/></svg>
    <svg class="t3" width="15" height="15"><path d="M1 14A13 13 0 0 1 13 2M4 14a10 10 0 0 1 9-9M7 14a7 7 0 0 1 6-6" fill="none" stroke="#d0d0d4" stroke-width="1.400"/><circle cx="11.500" cy="12.500" r="1.800" fill="#fff"/></svg>
    <svg class="t4" width="17" height="15"><path d="M.7 5h3l4-4v13l-4-4h-3z" fill="none" stroke="#e6e6e6" stroke-width="1.200"/><path d="M10 5q1.500 2.500 0 5M12 3q3 4.500 0 9M14 1q4 6.500 0 13" fill="none" stroke="#d0d0d4" stroke-width="1.100"/></svg>
    <span class="eng">ENG</span>
    <span class="clock">01:53 PM<br>28-04-2021</span>
    <svg class="t5" width="26" height="26"><path d="M1 1h16v12H8l-4 4v-4H1z" fill="#fff"/><path d="M4 4.500h10M4 7.500h10M4 10.500h6" stroke="#1c1b27" stroke-width="1.200"/><circle cx="16.500" cy="16.500" r="7.500" fill="#2b2b33" stroke="#8a8a90"/><text x="13.500" y="21" fill="#fff" font-family="Open Sans, sans-serif" font-size="12">1</text></svg>
    <i class="desk"></i>
  </div>
</footer>
</div>
</body>
</html>
```
FILE: styles.css
```css
* { box-sizing: border-box; }
body { margin: 0; background: #222831; overflow: hidden; font: 12px/16px "Open Sans", "Noto Sans", sans-serif; color: #e6e8eb; letter-spacing: -0.29px; }
svg { display: block; flex: none; }
.defs { position: absolute; }
.app { width: 1920px; height: 1080px; display: grid; grid-template-rows: 28px 20px 99px 30px 834px 29px 40px; }

.titlebar { display: flex; justify-content: space-between; align-items: flex-start; }
.quick { display: flex; align-items: center; gap: 8px; height: 22px; padding-left: 6px; width: 707px; flex: none; }
.quick .q1 { margin-right: 8px; }
.quick svg:nth-child(11) { margin-left: 1px; }
.quick svg:nth-child(12) { margin-left: -1px; }
.share { color: #7cc4f8; margin-left: -3px; }
.apptitle { display: flex; gap: 12px; line-height: 23px; flex: 1; letter-spacing: -0.3px; white-space: nowrap; }
.infocenter { display: flex; align-items: center; height: 22px; width: 574px; flex: none; }
.kw { width: 178px; height: 20px; background: #454d5f; font-style: italic; font-size: 11.500px; line-height: 19px; padding-left: 3px; color: #a9afba; margin-left: 2px; letter-spacing: -0.2px; }
.mag { margin-left: 6px; }
.usr { margin-left: 7px; }
.uname { margin-left: 5px; width: 85px; line-height: 23px; letter-spacing: -0.2px; }
.cart { margin-left: 12px; }
.tri { margin-left: 9px; }
.a2 { margin-left: 6px; }
.vsep { width: 1px; height: 18px; background: #4a515c; margin-left: 10px; }
.help { width: 16px; height: 16px; border-radius: 8px; background: #d8d8d8; color: #333; font-weight: 700; text-align: center; margin-left: 9px; }
.a3 { margin-left: 8px; }
.wc { margin-left: 69px; margin-top: 3px; }

.rtabs { display: grid; grid-template-columns: 62px 49px 69px 77px 45px 63px 58px 62px 81px 89px 107px 30px; padding-left: 4px; color: #a9aeb6; line-height: 20px; white-space: nowrap; }
.rtabs .on { width: 51px; background: #3b4453; font-weight: 400; color: #eceef0; text-align: center; }
.rtabs svg { margin-top: 7px; }

.ribbon { display: grid; grid-template-columns: 225px 250px 189px 273px 161px 265px 69px 97px 80px 310px; padding-left: 1px; }
.panel { background: #3b4453; border-right: 1px solid #242a34; display: flex; flex-direction: column; color: #e4e6ea; white-space: nowrap; }
.panel .body { height: 77px; display: flex; padding-top: 5px; }
.panel footer { height: 22px; display: flex; justify-content: center; align-items: center; gap: 6px; padding-top: 2px; }
.big { display: flex; flex-direction: column; align-items: center; text-align: center; padding-top: 2px; }
.big > svg:first-child { height: 34px; }
.big span { line-height: 15px; margin-top: 2px; }
.big .d { margin-top: 3px; }
.col { display: flex; flex-direction: column; }
.row { height: 24px; display: flex; align-items: center; gap: 5px; }

.p-draw .big:nth-child(1) { width: 44px; }
.p-draw .big:nth-child(2) { width: 43px; }
.p-draw .big:nth-child(3) { width: 56px; }
.p-draw .big:nth-child(4) { width: 37px; }
.p-draw .col { padding-left: 6px; }
.modgrid { display: grid !important; grid-template-columns: 72px 69px 75px 20px; grid-auto-rows: 24px; padding-left: 7px; }
.modgrid .w { width: 31px; }
.modgrid .row:nth-child(n+5) .w { width: 33px; }
.w1 { width: 36px; }
.w2 { width: 39px; }
.w3 { width: 78px; }
.p-ann .big:nth-child(1) { width: 40px; margin-left: 4px; }
.p-ann .big:nth-child(2) { width: 65px; }
.p-ann .col { padding-left: 4px; }
.p-lay .big { width: 60px; margin-left: 2px; }
.laycol { width: 209px; padding-top: 1px; }
.combo { height: 22px; background: #4c576a; border: 1px solid #2b323d; display: flex; align-items: center; }
.combo .r { margin-left: auto; margin-right: 1px; }
.laycombo svg:first-child { margin-left: 4px; width: 63px; }
.sw { width: 14px; height: 14px; background: #fff; border: 1px solid #111; margin: 0 5px 0 -5px; }
.laycombo .r { margin-right: 2px; }
.licons { display: grid; grid-template-columns: repeat(5, 24px) 1fr; grid-auto-rows: 24px; align-items: center; padding-left: 3px; margin-top: 1px; }
.licons span { margin-left: -3px; }
.p-blk .big { width: 43px; }
.p-blk .big > svg:first-child { margin-top: -2px; }
.p-blk .big span { margin-top: 3px; }
.p-blk .col { padding-left: 2px; }
.p-prop .big { width: 64px; }
.propgrid { display: grid; grid-template-columns: 18px 180px; grid-template-rows: 23px 24px 24px; align-items: center; }
.p-prop .s2 { margin: 0 10px 0 12px; width: 16px; height: 16px; border-color: #aaa; }
.ln { width: 64px; height: 1px; background: #fff; margin: 0 2px 0 3px; }
.fx { display: flex; align-items: center; gap: 6px; }
.p-prop footer { position: relative; padding-right: 11px; }
.la { position: absolute; right: 5px; top: 9px; }
.p-grp .big { width: 42px; }
.p-util .big { width: 72px; }
.p-util .col { padding-left: 2px; }
.p-clip .big { width: 54px; }
.p-clip .col { padding-left: 3px; }
.p-view .big { width: 62px; }
.p-view footer { justify-content: flex-start; padding-left: 5px; }
.lb { margin-left: 1px; }
.cell { width: 24px; height: 24px; display: flex; align-items: center; justify-content: center; border: 1px solid transparent; }
.cell.sel { height: 22px; margin-top: 1px; background: #35506d; border-color: #7cc4f8; }

.doctabs { display: flex; align-items: flex-end; padding: 0 0 4px 20px; background: linear-gradient(#3b4453, #3b4453) bottom/100% 4px no-repeat; color: #b4b9c2; }
.dt { height: 22px; display: flex; align-items: center; border-radius: 7px 7px 0 0; background: #2e3643; padding-top: 2px; }
.dt.start { width: 124px; padding-left: 12px; }
.dt.act { width: 171px; margin-left: 3px; background: #3b4453; padding-left: 8px; gap: 5px; color: #f0f1f3; clip-path: polygon(0 0, 97% 0, 100% 100%, 0 100%); }
.dt.act b { width: 135px; letter-spacing: -0.45px; white-space: nowrap; }
.dt.plus { width: 22px; height: 14px; margin: 0 0 3px 5px; padding-top: 0; justify-content: center; border-radius: 3px 7px 7px 7px; }

.canvas { position: relative; background: #212830; }
.major { stroke: #323a45; fill: none; }
.cad { fill: #fff; font-family: "Liberation Sans", sans-serif; letter-spacing: 0; }
.lab { font-size: 15px; text-anchor: middle; }
.dim { font-size: 9.500px; }
.inv { fill: none; stroke: #c8232c; stroke-width: 1.700; }
.thin { fill: none; stroke: #fff; stroke-width: 1; }
.ucs { fill: #fff; font: 300 18px "Open Sans", sans-serif; letter-spacing: 0; }
.vpl { fill: #e6e8eb; font: 11.500px "Liberation Sans", sans-serif; letter-spacing: 0; }
.blk { font-size: 32.500px; stroke: #fff; stroke-width: 0.700; }
.top { font: 700 14px "Liberation Sans", sans-serif; fill: #4c535b; letter-spacing: 0; }
.compass { font: 700 21px "Liberation Sans", sans-serif; fill: #b4b6b9; text-anchor: middle; letter-spacing: 0; }
.wcs { font: 11px "Liberation Sans", sans-serif; fill: #4d535d; letter-spacing: 0; }
.nav { fill: none; stroke: #3f444b; stroke-width: 1; }
.cmd { position: absolute; left: 112px; top: 808px; width: 1331px; height: 25px; display: flex; align-items: center; }
.grip { width: 55px; }
.cmdin { flex: 1; height: 25px; background: #bdbec0; border-radius: 2px 2px 0 0; display: flex; align-items: center; padding: 0 4px; color: #63666b; font: italic 11.300px "DejaVu Sans Mono", monospace; letter-spacing: 0.130px; }
.cmdin i { margin-left: 7px; }
.up { margin-left: auto; }

.status { display: flex; border-top: 1px solid #3a414c; padding-left: 12px; }
.lt { width: 58px; height: 17px; line-height: 16px; background: #2b3340; border-radius: 0 0 6px 6px; text-align: center; color: #b4b9c2; margin-right: 2px; clip-path: polygon(0 0, 100% 0, 95% 100%, 8% 100%); }
.lt:nth-child(2) { width: 60px; }
.lt:nth-child(3) { width: 66px; margin-right: 5px; }
.lt.m { background: #3b4759; color: #fff; letter-spacing: -0.4px; }
.lt.pl { width: 20px; display: flex; align-items: center; justify-content: center; }
.sb { margin-left: auto; display: flex; padding: 1px 3px 0 0; }
.s { height: 24px; background: #353e4c; display: flex; align-items: center; justify-content: center; margin-left: 3px; color: #e6e8eb; }
.s.on { background: #5a8cc4; }
.s.n { margin-left: 0; }
.s.n2 { margin-left: 1px; }
.s.g { margin-left: 3px; }
.s.h { margin-left: 2px; }
.sc { gap: 5px; font-size: 11px; letter-spacing: -0.6px; }

.taskbar { background: linear-gradient(90deg, #191a29, #1b1d30 40%, #1c2034 65%, #1a1922 100%); display: flex; letter-spacing: 0; }
.win { width: 48px; display: flex; align-items: center; justify-content: center; }
.search { width: 344px; background: #333; border: 1px solid #6c6c6c; display: flex; align-items: center; gap: 11px; padding-left: 11px; font-size: 15px; color: #d6d6d6; letter-spacing: -0.500px; }
.ti { width: 48px; display: flex; align-items: center; justify-content: center; position: relative; margin-right: 1px; }
.ti.lead { margin-left: 2px; }
.ti:nth-child(3) { margin-right: 0; }
.ti.run::after { content: ""; position: absolute; left: 4px; right: 4px; bottom: 0; height: 2px; background: #76b9ed; }
.ti.cur { background: #484b5a; }
.ti.cur::after { left: 0; right: 0; }
.tray { margin-left: auto; display: flex; align-items: center; width: 249px; }
.t2 { margin-left: 9px; }
.t3 { margin-left: 11px; }
.t4 { margin-left: 6px; }
.eng { margin-left: 10px; width: 35px; letter-spacing: -0.4px; }
.clock { width: 60px; text-align: center; line-height: 18px; letter-spacing: -0.5px; white-space: nowrap; }
.t5 { margin-left: 14px; margin-top: 2px; }
.desk { width: 1px; height: 40px; background: #5a5a62; margin-left: 10px; }
```
